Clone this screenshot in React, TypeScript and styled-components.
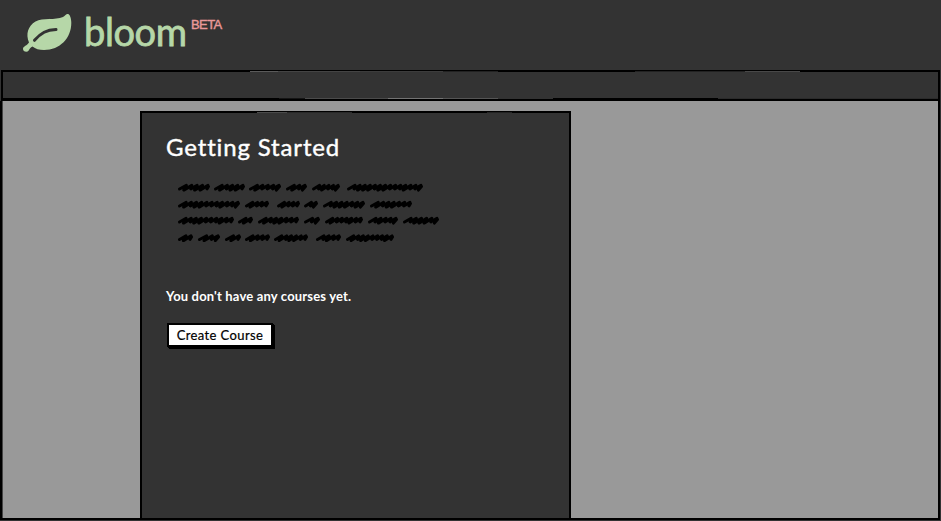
import React from 'react';
import styled, { createGlobalStyle } from 'styled-components';

const GlobalStyle = createGlobalStyle`
  *, *::before, *::after { box-sizing: border-box; }
  body { margin: 0; background: #333; }
`;

const Page = styled.div`
  width: 941px;
  height: 521px;
  display: flex;
  flex-direction: column;
  overflow: hidden;
  background: #333;
  color: #fff;
  font-family: Lato, sans-serif;
`;

const Header = styled.header`
  flex: 0 0 70px;
  display: flex;
  align-items: flex-start;
  padding: 12px 0 0 22px;
`;

const Leaf = styled.svg`
  width: 50px;
  height: 41px;
  flex: none;
`;

const Brand = styled.span`
  margin: -3px 0 0 12px;
  width: 103px;
  font-size: 38px;
  line-height: 44px;
  letter-spacing: -0.4px;
  color: #b6d7a8;
  -webkit-text-stroke: 0.8px #b6d7a8;
  white-space: nowrap;
`;

const Beta = styled.sup`
  margin: 5px 0 0 4px;
  font-family: "Liberation Sans", sans-serif;
  font-size: 13px;
  line-height: 16px;
  letter-spacing: -0.6px;
  color: #ea9999;
  -webkit-text-stroke: 0.4px #ea9999;
`;

/* Uneven one-pixel inner rules give the frame its hand-inked edge. */
const Nav = styled.nav`
  flex: 0 0 31px;
  margin: 0 1px;
  border: 2px solid #000;
  border-top-width: 1px;
  border-bottom-width: 2px;
  background:
    linear-gradient(to right, #000 247px, #5a5a5a 247px 275px, #444 275px 357px, #3c3c3c 357px 440px, #222 440px 495px, #000 495px 632px, #222 632px 742px, #484848 742px 797px, #000 797px) top / 100% 1px no-repeat,
    linear-gradient(to right, #000 276px, #151515 276px 302px, #4b4b4b 302px 385px, #737373 385px 440px, #555 440px 495px, #333 495px 550px, #000 550px 715px, #2b2b2b 715px) bottom / 100% 1px no-repeat,
    #333;
`;

const Body = styled.main`
  flex: 0 0 419px;
  display: flex;
  margin: 0 1px 0 0;
  padding: 10px 0 0 138px;
  background: linear-gradient(to right, #444 1px, #999 1px);
  border: solid #000;
  border-width: 0 2px 2px 2px;
`;

const Panel = styled.section`
  width: 431px;
  display: flex;
  flex-direction: column;
  align-items: flex-start;
  padding: 20px 24px 0;
  border: 2px solid #000;
  border-top-width: 1px;
  border-bottom: 0;
  background:
    linear-gradient(to right, #000 115px, #4b4b4b 115px 145px, #292929 145px 210px, #000 210px 345px, #222 345px 370px, #000 370px) top / 100% 1px no-repeat,
    #333;
`;

const Title = styled.h1`
  margin: 0;
  font-size: 24px;
  line-height: 30px;
  font-weight: 400;
  letter-spacing: 0.85px;
  -webkit-text-stroke: 0.4px #fff;
  white-space: nowrap;
`;

const Scribbles = styled.svg`
  width: 264px;
  height: 62px;
  margin: 18px 0 0 11px;
`;

const Notice = styled.p`
  margin: 45px 0 0;
  font-size: 13px;
  line-height: 18px;
  font-weight: 700;
  letter-spacing: 0.17px;
  white-space: nowrap;
`;

const Button = styled.button`
  width: 106px;
  height: 24px;
  margin: 18px 0 0 1px;
  padding: 0;
  border: 2px solid #000;
  box-shadow: 1px 1px 0 #000, 2px 2px 0 #000;
  background: #fff;
  color: #000;
  font: 400 13px/20px Lato, sans-serif;
  letter-spacing: 0.4px;
  -webkit-text-stroke: 0.2px #000;
  white-space: nowrap;
`;

const scribbleLines: { y: number; words: [number, number][] }[] = [
  { y: 7.5, words: [[1, 33], [37, 68], [72, 104], [109, 130], [135, 163], [170, 246]] },
  { y: 24.5, words: [[1, 63], [68, 92], [100, 123], [127, 141], [146, 188], [193, 235]] },
  { y: 40.5, words: [[1, 57], [61, 76], [81, 122], [127, 143], [148, 186], [191, 221], [226, 262]] },
  { y: 58, words: [[1, 16], [21, 43], [48, 64], [68, 93], [97, 131], [139, 164], [169, 217]] },
];

function wordPath(start: number, end: number, y: number) {
  const span = end - start - 5;
  const strokes = Math.max(2, Math.round(span / 5));
  const step = span / strokes;
  let d = `M${start + 1.5} ${y + 1.5}`;
  for (let i = 0; i < strokes; i++) {
    const x = start + 2 + i * step;
    const tight = (i * 5 + start + ((i * i) % 3)) % 4 < 2;
    d += ` L${x + step + 1} ${y - 2.1} L${x + step - (tight ? 1.6 : 0)} ${y + (tight ? 2.6 : 1.4)}`;
  }
  return `${d} L${end - 1.5} ${y - 1}`;
}

export default function App() {
  return (
    <>
      <GlobalStyle />
      <Page>
        <Header>
          <Leaf viewBox="22 12 50 41" aria-hidden="true">
            <path
              fill="#b6d7a8"
              d="M63 17C65.500 15.500 66 13.700 68 14C70 14.300 71.300 18.500 71.300 23C71.300 38 60 50 44 50C39 50 35.500 49 32.500 46.500C30.500 47.500 29.500 49 28.500 50.800C27 53 22.500 51.500 23 48.500C23.400 46.300 27 45.500 29 42.500C25.500 34 28 26 35.500 21.500C43 17.500 55 20.500 63 17Z"
            />
            <path d="M34.500 40.300C41 33 46.500 29.800 56 29.500" fill="none" stroke="#333" strokeWidth="3" strokeLinecap="round" />
          </Leaf>
          <Brand>bloom</Brand>
          <Beta>BETA</Beta>
        </Header>
        <Nav />
        <Body>
          <Panel>
            <Title>Getting Started</Title>
            <Scribbles viewBox="0 0 264 62" aria-hidden="true">
              {scribbleLines.map(({ y, words }) =>
                words.map(([a, b]) => (
                  <path key={`${y}-${a}`} d={wordPath(a, b, y)} fill="none" stroke="#000" strokeWidth="3" strokeLinecap="round" strokeLinejoin="round" />
                )),
              )}
            </Scribbles>
            <Notice>You don't have any courses yet.</Notice>
            <Button>Create Course</Button>
          </Panel>
        </Body>
      </Page>
    </>
  );
}
